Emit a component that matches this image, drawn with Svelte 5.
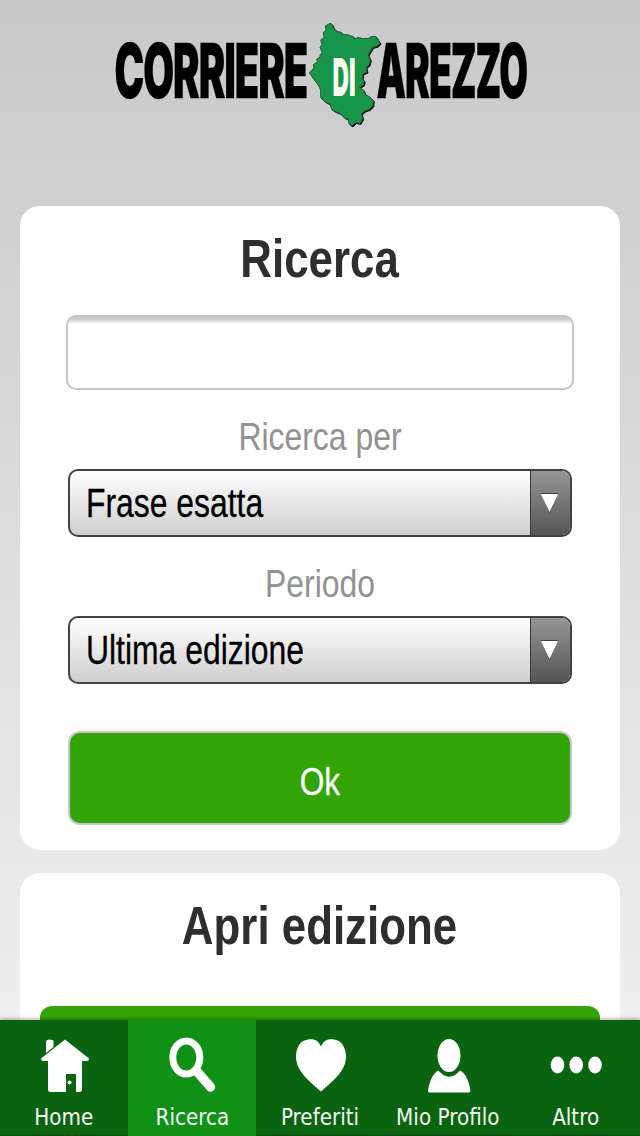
<script>
  const tabs = [
    { id: 'home', label: 'Home' },
    { id: 'ricerca', label: 'Ricerca' },
    { id: 'preferiti', label: 'Preferiti' },
    { id: 'profilo', label: 'Mio Profilo' },
    { id: 'altro', label: 'Altro' }
  ];

  let active = 'ricerca';
  let query = '';

  const fields = [
    { label: 'Ricerca per', value: 'Frase esatta' },
    { label: 'Periodo', value: 'Ultima edizione' }
  ];

  // outline of the province, drawn at 3x
  const region =
    'M90 40L97 44 100 54 112 65 122 66 128 74 138 73 160 80 165 87 175 82 188 86 205 85 215 79 228 80 240 100 232 108 218 112 212 122 204 135 211 150 207 165 198 172 201 186 188 192 187 206 193 214 190 225 178 232 190 240 196 254 208 260 220 272 218 288 208 298 194 303 184 312 188 326 180 340 166 338 156 348 147 342 145 328 134 324 120 310 104 304 95 298 90 282 76 276 62 262 62 240 54 224 45 212 28 188 42 174 40 164 52 156 50 147 60 142 60 134 67 128 60 112 66 104 62 90 72 82 70 68 78 60 76 48z';
</script>

<div class="app">
  <main>
    <header>
      <svg width="420" height="112" viewBox="0 0 420 112" role="img" aria-label="Corriere di Arezzo">
        <g transform="translate(3.500 80) scale(0.525 1)">
          <text class="logo-word" textLength="367" lengthAdjust="spacingAndGlyphs">CORRIERE</text>
        </g>
        <g transform="translate(265.500 80) scale(0.495 1)">
          <text class="logo-word" textLength="304" lengthAdjust="spacingAndGlyphs">AREZZO</text>
        </g>
        <g transform="translate(189 -8) scale(0.3333)">
          <path class="region-shadow" d={region} transform="translate(3 3)" />
          <path class="region" d={region} />
        </g>
        <g transform="translate(221.500 77.500) scale(0.42 1)">
          <text class="logo-di" textLength="55" lengthAdjust="spacingAndGlyphs">DI</text>
        </g>
      </svg>
    </header>

    <section class="card search">
      <h2><span class="narrow">Ricerca</span></h2>
      <input type="text" bind:value={query} aria-label="Ricerca" />
      {#each fields as field}
        <p class="label"><span class="narrow">{field.label}</span></p>
        <button class="select">
          <span class="value"><span class="narrow">{field.value}</span></span>
          <span class="arrow">
            <svg width="20" height="22" viewBox="0 0 20 22">
              <path d="M0.5 0h18L9.5 20.5z" fill="#444" />
              <path d="M0.8 1h17.4L9.5 19z" fill="#fff" />
            </svg>
          </span>
        </button>
      {/each}
      <button class="ok"><span class="narrow">Ok</span></button>
    </section>

    <section class="card edition">
      <h2><span class="narrow">Apri edizione</span></h2>
      <div class="edition-button"></div>
    </section>
  </main>

  <nav>
    {#each tabs as tab}
      <button class="tab" class:active={active === tab.id} on:click={() => (active = tab.id)}>
        <svg width="60" height="60" viewBox="0 0 60 60" fill="#fff">
          {#if tab.id === 'home'}
            <path d="M12 6q0-2.500 3.500-2.500T19.500 5v6l-7.500 6z" />
            <path d="M31 3.500L55 22.500q0 2.500-2 2.500H48v29q0 2-2.500 2H42V38H32v18H16.500q-2.500 0-2.500-2.500V25H9q-2 0-2-2.500z" />
            <circle cx="35.500" cy="46.500" r="2" />
          {:else if tab.id === 'ricerca'}
            <ellipse cx="24.300" cy="21.500" rx="13.500" ry="16.500" fill="none" stroke="#fff" stroke-width="7" />
            <path d="M35 35.500L48.500 51" stroke="#fff" stroke-width="9.500" stroke-linecap="round" />
          {:else if tab.id === 'preferiti'}
            <path d="M31 10.500C34 4 37 3 43 3.200 52 4 56 12 56 21 56 35 42 46 31 55.500 20 46 6 35 6 21 6 12 10 4 19 3.200 25 3 28 4 31 10.500z" />
          {:else if tab.id === 'profilo'}
            <ellipse cx="31" cy="19.500" rx="11.500" ry="16.500" />
            <path d="M20.500 34.500Q31 47 42 34.500c6 3 9 11 10.500 20q0 2-2 2h-39q-2 0-1.500-2c1.500-9 4.500-17 10.500-20z" />
          {:else}
            <ellipse cx="11.500" cy="29" rx="6.800" ry="8.500" />
            <ellipse cx="30.200" cy="29" rx="6.800" ry="8.500" />
            <ellipse cx="49" cy="29" rx="6.800" ry="8.500" />
          {/if}
        </svg>
        <span class="tab-label">{tab.label}</span>
      </button>
    {/each}
  </nav>
</div>

<style>
  :global(body) {
    margin: 0;
  }

  .app {
    width: 640px;
    height: 1136px;
    display: flex;
    flex-direction: column;
    overflow: hidden;
    font-family: 'Liberation Sans', Arial, sans-serif;
    background: linear-gradient(#c9c9c9, #f3f3f3);
  }

  main {
    flex: 1;
    min-height: 0;
    overflow: hidden;
  }

  header {
    height: 206px;
    box-sizing: border-box;
    padding: 18px 0 0 111px;
  }

  .logo-word {
    font-family: Inter, 'Liberation Sans', sans-serif;
    font-size: 75px;
    font-weight: 900;
    letter-spacing: -2px;
    fill: #000;
    stroke: #000;
    stroke-width: 0.4;
  }

  .logo-di {
    font-family: Inter, 'Liberation Sans', sans-serif;
    font-size: 52px;
    font-weight: 900;
    fill: #fffdf0;
  }

  .region {
    fill: #17954a;
    stroke: #245c38;
    stroke-width: 3;
    stroke-linejoin: round;
  }

  .region-shadow {
    fill: #111;
    stroke: #111;
    stroke-width: 3;
    stroke-linejoin: round;
  }

  .card {
    box-sizing: border-box;
    margin: 0 20px 23px;
    padding-top: 25px;
    background: #fff;
    border-radius: 20px;
    display: flex;
    flex-direction: column;
    align-items: center;
  }

  .search {
    height: 644px;
  }

  .edition {
    height: 220px;
  }

  h2 {
    margin: 0;
    font-size: 54px;
    line-height: 54px;
    font-weight: bold;
    color: #2e2e2e;
  }

  .narrow {
    display: inline-block;
    white-space: nowrap;
    transform: scaleX(0.812);
  }

  input {
    box-sizing: border-box;
    width: 508px;
    height: 75px;
    margin: 30px 0 0;
    padding: 0 16px;
    border: 2px solid #c6c6c6;
    border-radius: 10px;
    background: linear-gradient(#c6c6c6, #c9c9c9 2px, #fff 7px);
    font: 36px 'Liberation Sans', sans-serif;
    outline: none;
  }

  .label {
    margin: 26px 0 13px;
    font-size: 39.5px;
    line-height: 40px;
    color: #929292;
  }

  .label .narrow {
    transform: scaleX(0.808);
  }

  button {
    border: none;
    padding: 0;
    font-family: inherit;
    cursor: pointer;
  }

  .select {
    box-sizing: border-box;
    width: 504px;
    height: 68px;
    display: flex;
    border: 2px solid #424242;
    border-radius: 10px;
    background: linear-gradient(#fff, #cecece);
    overflow: hidden;
    font-size: 40px;
    line-height: 64px;
    color: #000;
  }

  .value {
    flex: 1;
    padding-left: 16px;
    text-align: left;
  }

  .value .narrow {
    transform: scaleX(0.797);
    transform-origin: left;
    -webkit-text-stroke: 0.3px #000;
  }

  .arrow {
    width: 40px;
    box-sizing: border-box;
    padding: 22px 0 0 9px;
    display: flex;
    border-left: 1px solid #383838;
    background: linear-gradient(#969696, #555);
  }

  .ok {
    box-sizing: border-box;
    width: 504px;
    height: 94px;
    margin-top: 47px;
    border: 2px solid #c9c4cc;
    border-radius: 12px;
    background: #32a405;
    color: #fff;
    font-size: 39px;
    padding-top: 7px;
    -webkit-text-stroke: 0.3px #fff;
  }

  .edition-button {
    width: 560px;
    height: 90px;
    margin-top: 54px;
    border-radius: 12px;
    background: #32a405;
  }

  nav {
    position: relative;
    height: 116px;
    display: flex;
    background: #0a630e;
    box-shadow: 0 -1px 4px rgba(0, 0, 0, 0.35);
  }

  .tab {
    width: 128px;
    box-sizing: border-box;
    padding-top: 16px;
    display: flex;
    flex-direction: column;
    align-items: center;
    background: transparent;
    border-bottom: 1px solid #0a4f0d;
  }

  .tab.active {
    background: #0e9115;
    border-bottom-color: #0e9115;
  }

  .tab-label {
    margin-top: 7px;
    font-family: 'DejaVu Sans', sans-serif;
    font-size: 23.5px;
    line-height: 28px;
    white-space: nowrap;
    color: #f4f8f2;
    transform: scaleX(0.85);
  }
</style>
